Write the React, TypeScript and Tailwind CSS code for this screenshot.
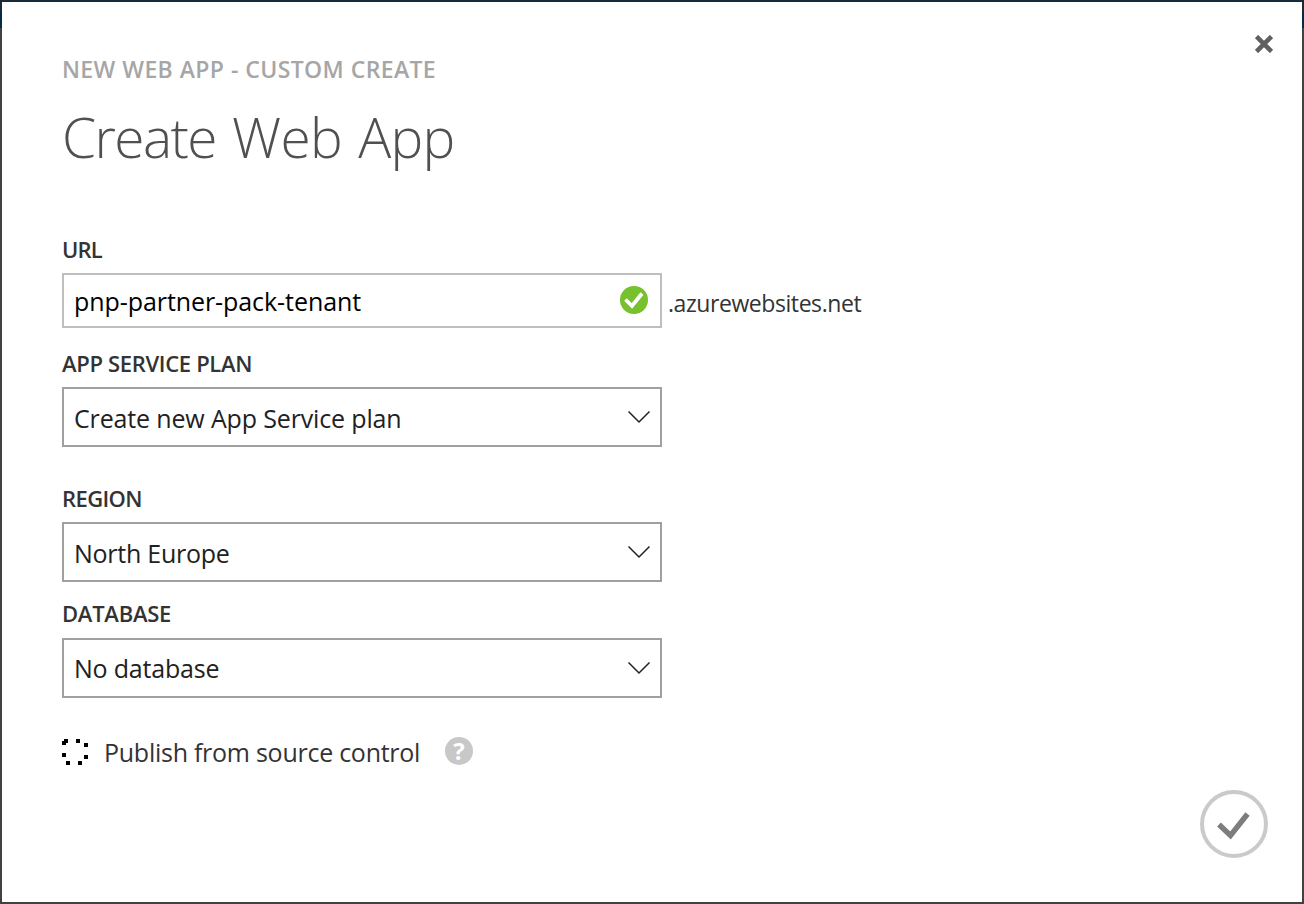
import React from "react";

function Chevron() {
  return (
    <svg width="24" height="14" viewBox="0 0 24 14" className="mr-[9px] mb-[1px] shrink-0" fill="none" stroke="#222" strokeWidth="1.5">
      <path d="M1.5 1.5 L12 12 L22.5 1.5" />
    </svg>
  );
}

function Label({ children, className }: { children: React.ReactNode; className: string }) {
  return (
    <div className="flex h-[30px]">
      <span className={`-mt-px text-[22px] leading-[30px] font-semibold whitespace-nowrap text-[#333] ${className}`}>{children}</span>
    </div>
  );
}

function SelectBox({ text, className }: { text: string; className: string }) {
  return (
    <div className="flex h-[60px] w-[600px] items-center justify-between border-2 border-[#a0a0a0] pl-[10px]">
      <span className={`text-[25px] leading-8 whitespace-nowrap text-[#212121] ${className}`}>{text}</span>
      <Chevron />
    </div>
  );
}

const spinnerDots = [
  [0, 2], [2, 0], [14, 0], [22, 4], [0, 14], [22, 16], [4, 22], [16, 22],
];

export default function App() {
  return (
    <div className="h-[904px] w-[1304px] bg-[linear-gradient(to_bottom,#172c36_0,#172c36_12px,#042c42_12px,#042c42_28px,#414143_28px)] p-[2px] font-['Open_Sans',sans-serif]">
      <div className="flex h-[900px] w-[1300px] flex-col bg-white pl-[60px]">
        <header className="flex h-[233px] justify-between">
          <div className="pt-[51px]">
            <div className="h-8 text-[23px] leading-8 font-semibold tracking-[0.36px] whitespace-nowrap text-[#a6a6a6] [word-spacing:0.3px]">NEW WEB APP - CUSTOM CREATE</div>
            <h1 className="mt-[14px] text-[55px] leading-[76px] font-light tracking-[-0.7px] whitespace-nowrap text-[#505050] [word-spacing:2.6px]">
              <span className="tracking-[-1.6px]">Create</span> Web App
            </h1>
          </div>
          <button aria-label="Close" className="mt-[33px] mr-[29px] h-[18px] w-[18px]">
            <svg width="18" height="18" viewBox="0 0 18 18" stroke="#606060" strokeWidth="4.6">
              <path d="M1.5 1.5 L16.5 16.5 M16.5 1.5 L1.5 16.5" />
            </svg>
          </button>
        </header>

        <main className="flex flex-col">
          <Label className="tracking-[-0.8px]">URL</Label>
          <div className="mt-2 flex h-[55px] items-center">
            <div className="flex h-[55px] w-[600px] items-center justify-between border-2 border-[#bebebe] pl-[10px]">
              <span className="pt-[1px] text-[25px] leading-8 tracking-[-0.07px] whitespace-nowrap text-black">pnp-partner-pack-tenant</span>
              <svg width="28" height="28" viewBox="0 0 28 28" className="mr-[12px] mb-[1px]">
                <circle cx="14" cy="14" r="14" fill="#76c12d" />
                <path d="M5.5 13.5 L12 20 L22 7.5" fill="none" stroke="#fff" strokeWidth="3.8" />
              </svg>
            </div>
            <span className="pt-[4px] pl-[6px] text-[23px] leading-8 tracking-[-0.43px] whitespace-nowrap text-[#333]">.azurewebsites.net</span>
          </div>
          <div className="h-[21px]" />
          <Label className="tracking-[-0.33px]">APP SERVICE PLAN</Label>
          <div className="h-2" />
          <SelectBox text="Create new App Service plan" className="pt-[2px] tracking-[-0.15px]" />
          <div className="h-[37px]" />
          <Label className="tracking-[-0.6px]">REGION</Label>
          <div className="h-2" />
          <SelectBox text="North Europe" className="pt-[2px] tracking-[-0.25px]" />
          <div className="h-[17px]" />
          <Label className="tracking-[-0.25px]">DATABASE</Label>
          <div className="h-[9px]" />
          <SelectBox text="No database" className="tracking-[-0.2px]" />
          <div className="mt-9 flex h-9 items-center">
            <svg width="26" height="26" viewBox="0 0 26 26" shapeRendering="crispEdges">
              {spinnerDots.map(([x, y]) => (
                <rect key={`${x}-${y}`} x={x} y={y} width="4" height="4" fill="#000" />
              ))}
            </svg>
            <span className="ml-[16px] w-[341px] text-[25px] leading-9 tracking-[-0.26px] whitespace-nowrap text-[#333]">Publish from source control</span>
            <span className="mb-[2px] flex h-7 w-7 items-center justify-center rounded-full bg-[#c8c8c8] text-[24px] leading-7 font-bold text-white">?</span>
          </div>
        </main>

        <footer className="mt-5 mr-[34px] flex justify-end">
          <button aria-label="Finish" className="h-[68px] w-[68px]">
            <svg width="68" height="68" viewBox="0 0 68 68" fill="none">
              <circle cx="34" cy="34" r="32" stroke="#cacaca" strokeWidth="4" />
              <path d="M19 34.5 L30.5 45.5 L47.5 24" stroke="#7d7d7d" strokeWidth="5.4" />
            </svg>
          </button>
        </footer>
      </div>
    </div>
  );
}
